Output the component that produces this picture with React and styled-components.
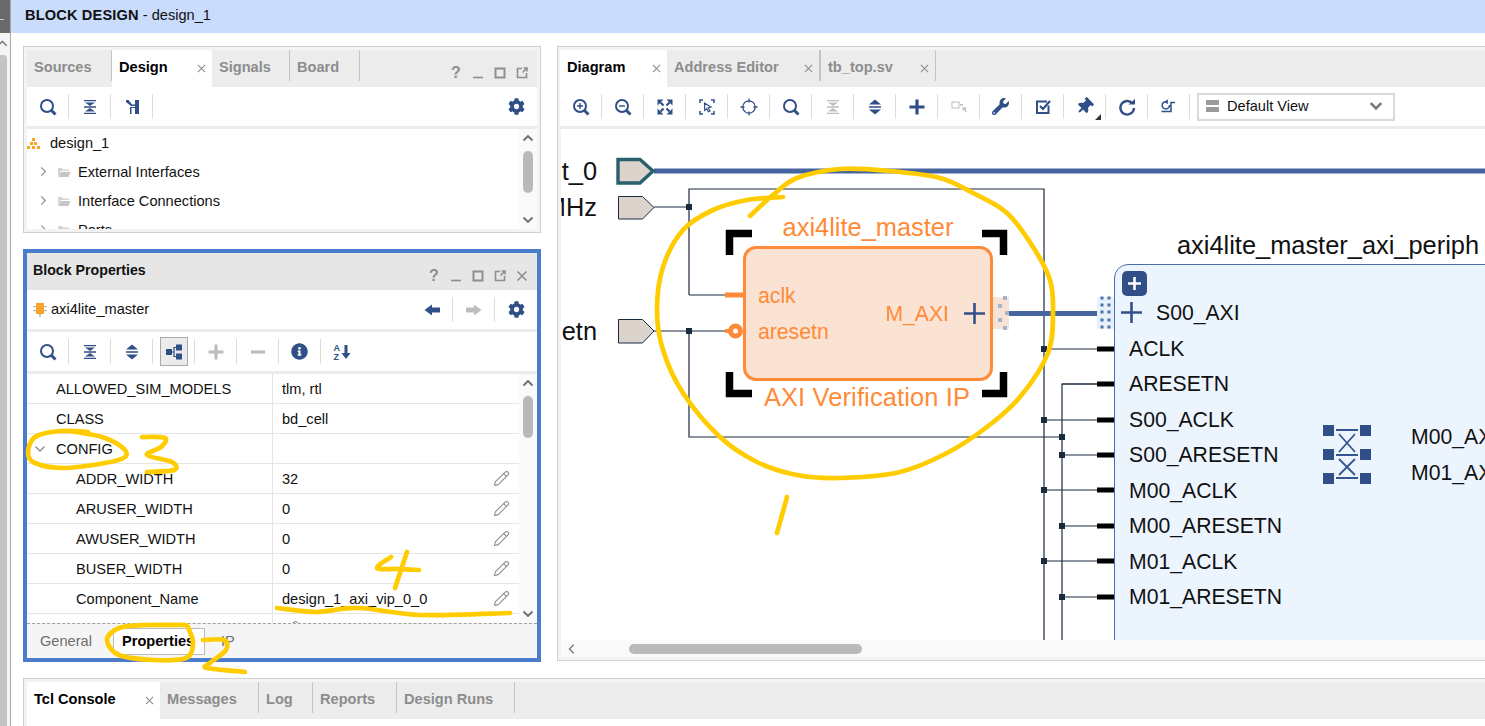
import React from "react";
import styled, { createGlobalStyle } from "styled-components";
import { FaCog, FaWrench, FaThumbtack, FaInfoCircle } from "react-icons/fa";
import { Pencil } from "lucide-react";

const Global = createGlobalStyle`
  html, body { margin: 0; padding: 0; background: #fff; overflow: hidden; }
  * { box-sizing: border-box; }
  body { font-family: "Liberation Sans", Arial, sans-serif; font-size: 14.6px; color: #111; }
`;

const BLUE = "#2f4f86";
const STRIP = "#ececec";

const Page = styled.div`
  position: relative; width: 1485px; height: 726px; overflow: hidden; display: flex; background: #fff;
`;
const Rail = styled.div`
  width: 11px; flex: none; display: flex; flex-direction: column; border-right: 1px solid #a9a9a9; background: #f4f4f4;
`;
const RailTop = styled.div`
  height: 33px; background: #6a6a6a; position: relative;
  &::after { content: ""; position: absolute; left: 0; top: 19px; width: 4px; height: 1px; background: #c8c8c8; }
`;
const RailArrow = styled.div`
  height: 22px; display: flex; align-items: center; color: #777;
`;
const RailThumb = styled.div`
  width: 7px; flex: 1; background: #c4c4c4; border-radius: 0 4px 0 0;
`;
const Main = styled.div`
  flex: 1; min-width: 0; display: flex; flex-direction: column;
`;
const Header = styled.div`
  height: 33px; flex: none; background: #c9dcfb; padding: 0 0 3px 14px; display: flex; align-items: center; font-size: 14.6px; white-space: pre;
  b { font-weight: 700; letter-spacing: 0.15px; }
`;
const Workspace = styled.div`
  display: flex; gap: 16px; padding: 13px 0 0 12px; flex: none; height: 645px;
`;
const LeftCol = styled.div`
  width: 518px; flex: none; display: flex; flex-direction: column; gap: 16px;
`;
const Panel = styled.div`
  border: 1px solid #d0d0d0; padding: 3px; background: #f3f3f3; display: flex; flex-direction: column;
`;
const SourcesPanel = styled(Panel)`height: 187px;`;
const PropsPanel = styled.div`
  height: 413px; border: 4px solid #4a7ccb; display: flex; flex-direction: column; background: #fff;
`;
const RightPane = styled(Panel)`
  flex: 1; min-width: 0; height: 615px; border-right: none; padding-right: 0; padding-left: 2px; overflow: hidden;
`;
const TabStrip = styled.div`
  height: 37px; flex: none; background: ${STRIP}; display: flex; align-items: flex-start; position: relative;
`;
const Tab = styled.div`
  width: ${p => p.$w}px; flex: none; height: ${p => (p.$active ? 37 : 31)}px; padding: 9px 6px 0 7px;
  display: flex; justify-content: space-between; line-height: 16px; font-weight: 700; font-size: 14.6px;
  color: ${p => (p.$active ? "#000" : "#8c8c8c")};
  background: ${p => (p.$active ? "#fff" : "transparent")};
  border-right: ${p => (p.$active ? "none" : `${p.$thick ? 2 : 1}px solid #c4c4c4`)};
`;
const CloseMark = styled.svg.attrs({ viewBox: "0 0 10 10" })`
  width: 9px; height: 9px; margin-top: 5px; flex: none; stroke: #8d8d8d; stroke-width: 1.2; fill: none;
`;
const Close = () => <CloseMark><path d="M1 1l8 8M9 1l-8 8" /></CloseMark>;
const WinButtons = styled.div`
  position: absolute; right: 4px; top: 13px; display: flex; color: #8e8e8e;
`;
const WinBtn = styled.div`
  width: 22px; height: 20px; display: flex; align-items: center; justify-content: center; font-weight: 700; font-size: 16px;
`;
const WinSvg = styled.svg.attrs({ viewBox: "0 0 12 12" })`
  width: 12px; height: 12px; fill: none; stroke: currentColor; stroke-width: 1.6;
`;
const Toolbar = styled.div`
  height: 42px; flex: none; background: #fff; border-bottom: 3px solid ${STRIP}; display: flex; align-items: center;
`;
const Tool = styled.div`
  width: 42px; height: 25px; flex: none; display: flex; align-items: center; justify-content: center;
  color: ${p => (p.$off ? "#bdbdbd" : BLUE)};
  border-right: ${p => (p.$last ? "none" : "1px solid #dcdcdc")};
`;
const ActiveBox = styled.div`
  width: 28px; height: 29px; background: #ebebeb; border: 1px solid #aaa; display: flex; align-items: center; justify-content: center;
`;
const Spacer = styled.div`flex: 1;`;
const Dropdown = styled.div`
  margin-left: 7px; width: 198px; height: 28px; border: 2px solid #d9d9d9; display: flex; align-items: center; padding: 0 10px 1px 7px; gap: 8px; font-size: 14.6px;
`;
const ViewBars = styled.div`
  width: 13px; height: 12px; flex: none; border-top: 5px solid #9a9a9a; border-bottom: 5px solid #9a9a9a;
`;
const TreeWrap = styled.div`
  height: 100px; flex: none; display: flex; background: #fff; overflow: hidden;
`;
const Tree = styled.div`flex: 1; min-width: 0;`;
const TreeRow = styled.div`
  height: 29px; flex: none; display: flex; align-items: center; white-space: nowrap; padding: 0 0 2px ${p => p.$pad}px;
`;
const TreeGlyph = styled.span`
  display: flex; align-items: center; justify-content: ${p => (p.$start ? "flex-start" : "center")}; width: ${p => p.$w}px; flex: none;
`;
const VScroll = styled.div`
  width: 18px; flex: none; background: #fafafa; display: flex; flex-direction: column; align-items: center; color: #6d6d6d;
`;
const VArrow = styled.div`
  height: 18px; flex: none; margin-top: ${p => (p.$bottom ? "auto" : "0")}; display: flex; align-items: center; justify-content: center;
`;
const VThumb = styled.div`
  width: 10px; height: 42px; flex: none; margin-top: ${p => p.$top}px; background: #b9b9b9; border-radius: 5px;
`;
const Chevron = styled.svg.attrs({ viewBox: "0 0 12 12" })`
  width: ${p => p.$s || 12}px; height: ${p => p.$s || 12}px; fill: none; stroke: ${p => p.$c || "currentColor"}; stroke-width: ${p => p.$sw || 1.8}; flex: none;
`;
const TitleBar = styled.div`
  height: 37px; flex: none; background: #e6e6e6; position: relative; font-weight: 700; padding: 9px 0 0 6px; line-height: 16px; font-size: 14.2px;
`;
const ObjectRow = styled(Toolbar)`padding-left: 0;`;
const ObjectName = styled.div`
  display: flex; align-items: center; padding: 0 0 2px 6px; gap: 4px; white-space: nowrap;
`;
const TableWrap = styled.div`
  height: 249px; flex: none; display: flex; overflow: hidden; background: #fff;
`;
const Table = styled.div`flex: 1; min-width: 0;`;
const Row = styled.div`
  display: grid; grid-template-columns: 246px 1fr; height: 30px; border-bottom: 1px solid #e5e5e5;
`;
const NameCell = styled.div`
  border-right: 1px solid #e5e5e5; display: flex; align-items: center; padding-left: ${p => p.$pad}px; white-space: nowrap;
`;
const ValueCell = styled.div`
  display: flex; align-items: center; justify-content: space-between; padding: 0 9px 0 9px; white-space: nowrap;
`;
const RowChevron = styled.span`
  width: 29px; flex: none; display: flex; padding-left: 7px; color: #8a8a8a;
`;
const PenIcon = styled(Pencil)`
  width: 17px; height: 17px; color: #8c8c8c; stroke-width: 1.5; flex: none;
`;
const BottomTabs = styled.div`
  height: 35px; flex: none; border-top: 1px dashed #a0a0a0; background: #f5f5f5; display: flex; align-items: center; padding-left: 13px; font-size: 14.6px;
`;
const BottomTab = styled.div`
  height: 27px; display: flex; align-items: center; white-space: nowrap;
  width: ${p => p.$w}px; flex: none; padding-left: ${p => p.$pad}px;
  color: ${p => (p.$active ? "#000" : "#6e6e6e")}; font-weight: ${p => (p.$active ? 700 : 400)};
  background: ${p => (p.$active ? "#fff" : "transparent")};
  border: ${p => (p.$active ? "1px solid #bbb" : "none")};
`;
const Canvas = styled.div`
  position: relative; flex: 1; min-height: 0; margin-left: 1px; overflow: hidden; background: #fff;
`;
const Wires = styled.svg`
  position: absolute; left: 0; top: 0; width: 924px; height: 511px;
`;
const PortLabel = styled.div`
  position: absolute; right: 888px; top: ${p => p.$y - 129 - 15}px; line-height: 30px; font-size: 25.4px; white-space: nowrap; color: #111;
`;
const IpBlock = styled.div`
  position: absolute; left: 182px; top: 117px; width: 250px; height: 135px; border: 3px solid #ff8a38; border-radius: 13px; background: #fbe3d3;
  display: flex; align-items: center; justify-content: space-between; padding: 0 5px 0 12px; color: #ff8a38; font-size: 21.2px;
`;
const IpTitle = styled.div`
  position: absolute; left: -2px; right: 0; text-align: center; line-height: 28px; font-size: 25.4px; white-space: nowrap; color: #ff8a38;
  ${p => (p.$below ? "top: calc(100% + 5px); letter-spacing: 0.15px;" : "bottom: calc(100% + 8px); left: 0;")}
`;
const IpPins = styled.div`display: flex; flex-direction: column;`;
const IpPin = styled.div`height: 36px; line-height: 36px; white-space: nowrap;`;
const IpOutput = styled.div`display: flex; align-items: center; gap: 15px;`;
const BluePlus = styled.svg.attrs({ viewBox: "0 0 21 21" })`
  width: 21px; height: 21px; flex: none; stroke: #34508a; stroke-width: 2.6; fill: none;
`;
const Interconnect = styled.div`
  position: absolute; left: 553px; top: 135px; width: 500px; height: 400px; background: #ecf4fe; border: 1px solid #4a6ea9; border-radius: 14px 0 0 0;
  display: flex; font-size: 21.2px; color: #111;
`;
const NodeTitle = styled.div`
  position: absolute; left: 62px; bottom: calc(100% + 6px); line-height: 28px; font-size: 25.4px; white-space: nowrap; color: #111;
`;
const ExpandBtn = styled.div`
  position: absolute; left: 7px; top: 6px; width: 25px; height: 25px; border-radius: 5px; background: ${BLUE}; display: flex; align-items: center; justify-content: center;
`;
const PinsLeft = styled.div`
  width: 208px; flex: none; padding: 30px 0 0 14px; display: flex; flex-direction: column;
`;
const Pin = styled.div`
  height: 35.5px; line-height: 35.5px; white-space: nowrap; display: flex; align-items: center;
  ${p => p.$plus && "margin-left: -8px; gap: 14px;"}
`;
const CrossIcon = styled.svg.attrs({ viewBox: "0 0 48 59" })`
  width: 48px; height: 59px; margin-top: 160px; flex: none;
`;
const PinsRight = styled.div`
  margin: 154px 0 0 40px; flex: none; display: flex; flex-direction: column;
`;
const HScroll = styled.div`
  height: 17px; flex: none; margin-left: 1px; background: #fafafa; display: flex; align-items: center; padding-left: 6px; color: #777;
`;
const HThumb = styled.div`
  width: 233px; height: 10px; margin-left: 52px; background: #bababa; border-radius: 5px;
`;
const Console = styled.div`
  margin-left: 12px; flex: none; height: 48px; border-top: 1px solid #d0d0d0; border-left: 1px solid #d0d0d0; padding: 3px 0 0 3px; background: #f3f3f3;
`;
const ConsoleBody = styled.div`height: 8px; background: #fff;`;
const InkLayer = styled.svg`
  position: absolute; left: 0; top: 0; width: 1485px; height: 726px; pointer-events: none; fill: none; stroke: #ffcc00; stroke-width: 4.7; stroke-linecap: round; stroke-linejoin: round;
`;

const Ico = styled.svg.attrs({ viewBox: "0 0 20 20" })`
  width: 20px; height: 20px; flex: none; fill: currentColor; stroke: none;
`;
const Glyph = styled.g`fill: none; stroke: currentColor;`;

const Search = ({ inner }) => (
  <Ico>
    <Glyph strokeWidth="2"><circle cx="9" cy="9" r="6" /></Glyph>
    <Glyph strokeWidth="3"><path d="M13.5 13.5l4 4" /></Glyph>
    {inner && <Glyph strokeWidth="1.4"><path d={inner} /></Glyph>}
  </Ico>
);
const CollapseAll = () => (
  <Ico>
    <path d="M4 3h12v1.3H4zM4 9.3h12v1.4H4zM4 15.7h12V17H4zM5 5.500h10L10 9zM5 14.500h10L10 11z" />
  </Ico>
);
const ExpandAll = () => (
  <Ico>
    <path d="M10 2.500l6 5H4zM4 9.200h12v1.600H4zM4 12.500h12l-6 5z" />
  </Ico>
);
const HierStep = () => (
  <Ico>
    <path d="M4 3h2.500L10 7.500h3V3h4v14h-4v-6H9.500v6H8v-7h5V9H9L4 5z" />
  </Ico>
);
const Fit = () => (
  <Ico>
    <path d="M2.500 2.500h6l-6 6zM17.500 2.500v6l-6-6zM2.500 17.500v-6l6 6zM17.500 17.500h-6l6-6z" />
    <Glyph strokeWidth="2.200"><path d="M5.500 5.500l3 3M14.500 5.500l-3 3M5.500 14.500l3-3M14.500 14.500l-3-3" /></Glyph>
  </Ico>
);
const SelectArea = () => (
  <Ico>
    <Glyph strokeWidth="1.500"><path d="M6 3H3v3M14 3h3v3M3 14v3h3M17 14v3h-3" /></Glyph>
    <Glyph strokeWidth="1.200"><path d="M7.500 6l6.500 4-2.800.7L13 14l-1.600.8-1.700-3.200-2 1.800z" /></Glyph>
  </Ico>
);
const Target = () => (
  <Ico>
    <Glyph strokeWidth="1.300"><circle cx="10" cy="10" r="6.200" /><path d="M10 1.500v4M10 14.500v4M1.500 10h4M14.500 10h4" /></Glyph>
  </Ico>
);
const PlusIco = () => (
  <Ico><path d="M8.400 2.500h3.200v5.900h5.900v3.200h-5.900v5.900H8.400v-5.900H2.500V8.400h5.900z" /></Ico>
);
const MinusIco = () => (
  <Ico><path d="M3 8.400h14v3.200H3z" /></Ico>
);
const RouteOff = () => (
  <Ico>
    <Glyph strokeWidth="1"><rect x="3" y="5" width="7" height="6" /></Glyph>
    <path d="M11 7h3v1.500h-3zM13 10.500h5l-1.500 1.500 1.200 3-1.300.5-1.200-3-1.200 1.200z" />
  </Ico>
);
const CheckBox = () => (
  <Ico>
    <Glyph strokeWidth="2"><path d="M15.500 8.500v7.500H4V4.500h10" /></Glyph>
    <Glyph strokeWidth="2.200"><path d="M7 9l3 3 7-8" /></Glyph>
  </Ico>
);
const Refresh = () => (
  <Ico>
    <Glyph strokeWidth="2.400"><path d="M15.500 6.500A6.800 6.800 0 1 0 17 11" /></Glyph>
    <path d="M11.500 7.500h6.500V2z" />
  </Ico>
);
const Regen = () => (
  <Ico>
    <Glyph strokeWidth="1.500"><path d="M7.500 4.700A3.700 3.700 0 1 0 10.500 8M2.500 14.500H12V5.500h4" /></Glyph>
    <path d="M5.500 4.800l3.400-2.600v5z" />
  </Ico>
);
const ArrowLeft = () => (
  <Ico><path d="M2.500 10L10 4.500v3h8v5h-8v3z" /></Ico>
);
const ArrowRight = () => (
  <Ico><path d="M17.500 10L10 4.500v3H2v5h8v3z" /></Ico>
);
const HierToggle = () => (
  <Ico>
    <path d="M2 7h6v6H2zM12 2.500h6v6h-6zM12 11.500h6v6h-6z" />
    <Glyph strokeWidth="1.200"><path d="M8 10h2V5.500h2M10 10v4.500h2" /></Glyph>
  </Ico>
);
const SortLetter = styled.text`
  font-family: "Liberation Sans", Arial, sans-serif; font-size: 9px; font-weight: 700; fill: currentColor;
`;
const SortAZ = () => (
  <Ico>
    <SortLetter x="1.500" y="9">A</SortLetter>
    <SortLetter x="1.500" y="18">Z</SortLetter>
    <path d="M12.500 3h3v8h3l-4.500 6-4.500-6h3z" />
  </Ico>
);
const Gear = () => <FaCog size={17} color={BLUE} />;
const Pin45 = styled(FaThumbtack)`
  transform: rotate(45deg); width: 17px; height: 17px; color: ${BLUE};
`;
const PinWrap = styled.div`
  position: relative; display: flex;
  &::after { content: ""; position: absolute; right: -8px; bottom: -5px; border: 3px solid transparent; border-right-color: #333; border-bottom-color: #333; }
`;
const OrgIcon = () => (
  <svg viewBox="0 0 13 12" width="13" height="12">
    <path fill="#fba51e" d="M5 1h3v3H5zM3 5h3v3H3zM7 5h3v3H7zM0 9h3v3H0zM5 9h3v3H5zM10 9h3v3h-3z" />
  </svg>
);
const FolderIcon = () => (
  <svg viewBox="0 0 14 12" width="14" height="12">
    <path fill="#d4d4d4" d="M1 2h4l1 1.500h6V5H3.500L1 10.500z" />
    <path fill="#c6c6c6" d="M3.500 6H13.500l-2 5H1.200z" />
  </svg>
);
const CellIcon = () => (
  <svg viewBox="0 0 14 16" width="14" height="16">
    <path fill="#b5b5b5" d="M0 5h3v1.300H0zM0 9h3v1.300H0zM11 5h3v1.300h-3zM11 9h3v1.300h-3zM6.300 13h1.400v3H6.300z" />
    <rect x="3" y="2" width="8" height="11" fill="#f9a32c" />
  </svg>
);

/* Ink strokes are hand drawn: interpolated through the traced points. */
const smooth = pts => {
  let d = `M${pts[0][0]} ${pts[0][1]}`;
  for (let i = 0; i < pts.length - 1; i++) {
    const p0 = pts[i - 1] || pts[i];
    const p1 = pts[i];
    const p2 = pts[i + 1];
    const p3 = pts[i + 2] || p2;
    const c1x = p1[0] + (p2[0] - p0[0]) / 6;
    const c1y = p1[1] + (p2[1] - p0[1]) / 6;
    const c2x = p2[0] - (p3[0] - p1[0]) / 6;
    const c2y = p2[1] - (p3[1] - p1[1]) / 6;
    d += `C${c1x.toFixed(1)} ${c1y.toFixed(1)} ${c2x.toFixed(1)} ${c2y.toFixed(1)} ${p2[0]} ${p2[1]}`;
  }
  return d;
};
const INK = [
  [[750,216],[773,195],[797,178],[840,169],[890,171],[940,178],[973,193],[1007,213],[1033,247],[1050,280],[1053,313],[1048,353],[1020,397],[987,427],[947,453],[900,472],[840,478],[797,475],[757,462],[720,437],[683,393],[663,350],[657,310],[663,267],[683,230],[713,210],[747,200],[783,197]],
  [[787,497],[782,515],[777,533]],
  [[70,431],[102,437],[123,448],[125,457],[105,463],[63,468],[35,463],[28,453],[35,437],[60,431],[88,432]],
  [[142,437],[165,438],[161,447],[147,455],[172,462],[174,470],[147,472]],
  [[391,557],[377,568],[398,569],[419,570]],
  [[407,552],[401,570],[395,588]],
  [[277,608],[316,612],[358,608],[421,615],[510,613]],
  [[186,625],[147,625],[119,628],[107,640],[119,655],[154,660],[186,658],[193,643],[188,627]],
  [[203,640],[224,640],[226,650],[210,663],[207,668],[245,672]],
];

const propRows = [
  ["ALLOWED_SIM_MODELS", "tlm, rtl", 29],
  ["CLASS", "bd_cell", 29],
  ["CONFIG", "", 0],
  ["ADDR_WIDTH", "32", 49, true],
  ["ARUSER_WIDTH", "0", 49, true],
  ["AWUSER_WIDTH", "0", 49, true],
  ["BUSER_WIDTH", "0", 49, true],
  ["Component_Name", "design_1_axi_vip_0_0", 49, true],
  ["", "", 49, true],
];
const leftPins = ["ACLK", "ARESETN", "S00_ACLK", "S00_ARESETN", "M00_ACLK", "M00_ARESETN", "M01_ACLK", "M01_ARESETN"];

const Windows = ({ close }) => (
  <WinButtons>
    <WinBtn>?</WinBtn>
    <WinBtn><WinSvg><path d="M1 10.500h10" /></WinSvg></WinBtn>
    <WinBtn><WinSvg><rect x="1.500" y="1.500" width="9" height="9" strokeWidth="2" /></WinSvg></WinBtn>
    <WinBtn><WinSvg><path d="M6 1.500H1.500v9h9V6M6.500 5.500L11 1M7.500 1H11v3.500" /></WinSvg></WinBtn>
    {close && <WinBtn><WinSvg><path d="M1.500 1.500l9 9M10.500 1.500l-9 9" /></WinSvg></WinBtn>}
  </WinButtons>
);
const ChevUp = () => <Chevron><path d="M1.500 8.500L6 4l4.500 4.500" /></Chevron>;
const ChevDown = () => <Chevron><path d="M1.500 3.500L6 8l4.500-4.500" /></Chevron>;
const ChevRight = () => <Chevron $s={11} $c="#8f8f8f" $sw={1.300}><path d="M3.500 1.500L8 6l-4.500 4.500" /></Chevron>;

const Scroll = ({ top }) => (
  <VScroll>
    <VArrow><ChevUp /></VArrow>
    <VThumb $top={top} />
    <VArrow $bottom><ChevDown /></VArrow>
  </VScroll>
);

const Diagram = () => {
  const X = v => v - 561;
  const Y = v => v - 129;
  const wire = "#1a2b40";
  const pinYs = [349, 384, 420, 455, 490, 526, 561, 597];
  const squares = [];
  const J = (x, y) => squares.push(<rect key={`${x}-${y}`} x={X(x) - 3} y={Y(y) - 3} width="6" height="6" fill={wire} />);
  [[689, 207], [689, 331], [1062, 437]].forEach(([x, y]) => J(x, y));
  pinYs.forEach((y, i) => { if (i !== 1) J(i % 2 ? 1062 : 1044, y); });
  return (
    <Canvas>
      <Wires viewBox="0 0 924 511">
        <g fill="none" stroke={wire} strokeWidth="1.200">
          <path d={`M${X(689)} ${Y(295)}V${Y(189)}H${X(1044)}V${Y(645)}`} />
          <path d={`M${X(654)} ${Y(207)}H${X(689)}`} />
          <path d={`M${X(689)} ${Y(295)}H${X(726)}`} />
          <path d={`M${X(654)} ${Y(331)}H${X(726)}`} />
          <path d={`M${X(689)} ${Y(331)}V${Y(437)}H${X(1062)}`} />
          <path d={`M${X(1098)} ${Y(384)}H${X(1062)}V${Y(645)}`} />
          {pinYs.map((y, i) => <path key={y} d={`M${X(i % 2 ? 1062 : 1044)} ${Y(y)}H${X(1098)}`} />)}
        </g>
        {squares}
        {pinYs.map(y => <rect key={y} x={X(1097)} y={Y(y) - 2.500} width="17" height="5" fill="#000" />)}
        <path d={`M${X(654)} ${Y(171)}H924`} stroke="#46649f" strokeWidth="5" />
        <path d={`M${X(1009)} ${Y(313.500)}H${X(1098)}`} stroke="#46649f" strokeWidth="5" />
        <path d={`M${X(618)} ${Y(159.500)}h22l13 11.500-13 12h-22z`} fill="#dcd3cd" stroke="#2a5f6e" strokeWidth="3.400" />
        <path d={`M${X(618.500)} ${Y(196.500)}h24l11.500 11-11.500 11.500h-24z`} fill="#dcd3cd" stroke={wire} strokeWidth="1" />
        <path d={`M${X(618.500)} ${Y(319.500)}h24l11.500 11.500-11.500 12h-24z`} fill="#dcd3cd" stroke={wire} strokeWidth="1" />
        <rect x={X(725)} y={Y(292.500)} width="18" height="5" fill="#ff8a38" />
        <rect x={X(725)} y={Y(329)} width="8" height="4" fill="#ff8a38" />
        <circle cx={X(735.500)} cy={Y(331)} r="5" fill="#fff" stroke="#ff8a38" strokeWidth="5" />
        <rect x={X(993)} y={Y(297)} width="16" height="32" fill="#f7e2d5" />
        {[[1005, 298], [1000, 306], [1007, 313], [1000, 320], [1005, 328]].map(([x, y]) => (
          <rect key={y} x={X(x) - 2} y={Y(y) - 2} width="4" height="4" fill="#a8b2c8" />
        ))}
        <rect x={X(1097)} y={Y(297)} width="17" height="32" fill="#e8f1fb" />
        {[1102, 1109].flatMap(x => [298, 305, 312, 320, 327].map(y => (
          <rect key={`${x}${y}`} x={X(x) - 1.500} y={Y(y) - 1.500} width="3" height="3" fill="#4a74ab" />
        )))}
        <g fill="none" stroke="#000" strokeWidth="7.500">
          <path d={`M${X(729.500)} ${Y(255)}V${Y(233.500)}H${X(752)}`} />
          <path d={`M${X(982)} ${Y(233.500)}H${X(1003.500)}V${Y(255)}`} />
          <path d={`M${X(729.500)} ${Y(372)}V${Y(393.500)}H${X(752)}`} />
          <path d={`M${X(982)} ${Y(393.500)}H${X(1003.500)}V${Y(372)}`} />
        </g>
      </Wires>

      <PortLabel $y={171}>t_0</PortLabel>
      <PortLabel $y={207}>MHz</PortLabel>
      <PortLabel $y={331}>etn</PortLabel>

      <IpBlock>
        <IpTitle>axi4lite_master</IpTitle>
        <IpPins>
          <IpPin>aclk</IpPin>
          <IpPin>aresetn</IpPin>
        </IpPins>
        <IpOutput>
          M_AXI
          <BluePlus><path d="M0 10.500h21M10.500 0v21" /></BluePlus>
        </IpOutput>
        <IpTitle $below>AXI Verification IP</IpTitle>
      </IpBlock>

      <Interconnect>
        <NodeTitle>axi4lite_master_axi_periph</NodeTitle>
        <ExpandBtn>
          <svg viewBox="0 0 13 13" width="13" height="13"><path d="M6.500 0v13M0 6.500h13" stroke="#fff" strokeWidth="2.600" /></svg>
        </ExpandBtn>
        <PinsLeft>
          <Pin $plus><BluePlus><path d="M0 10.500h21M10.500 0v21" /></BluePlus>S00_AXI</Pin>
          {leftPins.map(p => <Pin key={p}>{p}</Pin>)}
        </PinsLeft>
        <CrossIcon>
          <g fill={BLUE}>
            {[0, 24, 48].flatMap(y => [0, 37].map(x => <rect key={`${x}${y}`} x={x} y={y} width="11" height="11" />))}
          </g>
          <g fill="none" stroke="#34558f" strokeWidth="1.800">
            <path d="M13 5h22M13 30h22M13 53h22" />
            <path d="M16 9l16 18M32 9L16 27M16 34l16 16M32 34L16 50" />
          </g>
        </CrossIcon>
        <PinsRight>
          <Pin>M00_AXI</Pin>
          <Pin>M01_AXI</Pin>
        </PinsRight>
      </Interconnect>
    </Canvas>
  );
};

export default function App() {
  return (
    <Page>
      <Global />
      <Rail>
        <RailTop />
        <RailArrow><Chevron $s={10}><path d="M-3 8L3 3l5 5" /></Chevron></RailArrow>
        <RailThumb />
      </Rail>
      <Main>
        <Header><b>BLOCK DESIGN</b> - design_1</Header>
        <Workspace>
          <LeftCol>
            <SourcesPanel>
              <TabStrip>
                <Tab $w={85}>Sources</Tab>
                <Tab $w={100} $active>Design<Close /></Tab>
                <Tab $w={78}>Signals</Tab>
                <Tab $w={70}>Board</Tab>
                <Windows />
              </TabStrip>
              <Toolbar>
                <Tool><Search /></Tool>
                <Tool><CollapseAll /></Tool>
                <Tool><HierStep /></Tool>
                <Spacer />
                <Tool $last><Gear /></Tool>
              </Toolbar>
              <TreeWrap>
                <Tree>
                  <TreeRow $pad={0}><TreeGlyph $w={23} $start><OrgIcon /></TreeGlyph>design_1</TreeRow>
                  <TreeRow $pad={11}><TreeGlyph $w={11}><ChevRight /></TreeGlyph><TreeGlyph $w={29}><FolderIcon /></TreeGlyph>External Interfaces</TreeRow>
                  <TreeRow $pad={11}><TreeGlyph $w={11}><ChevRight /></TreeGlyph><TreeGlyph $w={29}><FolderIcon /></TreeGlyph>Interface Connections</TreeRow>
                  <TreeRow $pad={11}><TreeGlyph $w={11}><ChevRight /></TreeGlyph><TreeGlyph $w={29}><FolderIcon /></TreeGlyph>Ports</TreeRow>
                </Tree>
                <Scroll top={4} />
              </TreeWrap>
            </SourcesPanel>
            <PropsPanel>
              <TitleBar>Block Properties<Windows close /></TitleBar>
              <ObjectRow>
                <ObjectName><CellIcon />axi4lite_master</ObjectName>
                <Spacer />
                <Tool><ArrowLeft /></Tool>
                <Tool $off><ArrowRight /></Tool>
                <Tool $last><Gear /></Tool>
              </ObjectRow>
              <Toolbar>
                <Tool><Search /></Tool>
                <Tool><CollapseAll /></Tool>
                <Tool><ExpandAll /></Tool>
                <Tool><ActiveBox><HierToggle /></ActiveBox></Tool>
                <Tool $off><PlusIco /></Tool>
                <Tool $off><MinusIco /></Tool>
                <Tool><FaInfoCircle size={17} /></Tool>
                <Tool $last><SortAZ /></Tool>
              </Toolbar>
              <TableWrap>
                <Table>
                  {propRows.map(([name, value, pad, editable], i) => (
                    <Row key={i}>
                      <NameCell $pad={pad}>
                        {pad === 0 && <RowChevron><Chevron $s={12} $c="#8f8f8f" $sw={1.300}><path d="M1.500 3.500L6 8l4.500-4.500" /></Chevron></RowChevron>}
                        {name}
                      </NameCell>
                      <ValueCell>{value}{editable && <PenIcon />}</ValueCell>
                    </Row>
                  ))}
                </Table>
                <Scroll top={4} />
              </TableWrap>
              <BottomTabs>
                <BottomTab $w={73} $pad={0}>General</BottomTab>
                <BottomTab $w={92} $pad={8} $active>Properties</BottomTab>
                <BottomTab $w={40} $pad={16}>IP</BottomTab>
              </BottomTabs>
            </PropsPanel>
          </LeftCol>
          <RightPane>
            <TabStrip>
              <Tab $w={107} $active>Diagram<Close /></Tab>
              <Tab $w={154} $thick>Address Editor<Close /></Tab>
              <Tab $w={115}>tb_top.sv<Close /></Tab>
            </TabStrip>
            <Toolbar>
              <Tool><Search inner="M6 9h6M9 6v6" /></Tool>
              <Tool><Search inner="M6 9h6" /></Tool>
              <Tool><Fit /></Tool>
              <Tool><SelectArea /></Tool>
              <Tool><Target /></Tool>
              <Tool><Search /></Tool>
              <Tool $off><CollapseAll /></Tool>
              <Tool><ExpandAll /></Tool>
              <Tool><PlusIco /></Tool>
              <Tool $off><RouteOff /></Tool>
              <Tool><FaWrench size={17} /></Tool>
              <Tool><CheckBox /></Tool>
              <Tool><PinWrap><Pin45 /></PinWrap></Tool>
              <Tool><Refresh /></Tool>
              <Tool><Regen /></Tool>
              <Dropdown>
                <ViewBars />
                Default View
                <Spacer />
                <Chevron $s={14} $c="#777" $sw={2.200}><path d="M1.500 3.500L6 8l4.500-4.500" /></Chevron>
              </Dropdown>
            </Toolbar>
            <Diagram />
            <HScroll>
              <Chevron $s={10} $sw={1.600}><path d="M8 1L3 6l5 5" /></Chevron>
              <HThumb />
            </HScroll>
          </RightPane>
        </Workspace>
        <Console>
          <TabStrip>
            <Tab $w={133} $active>Tcl Console<Close /></Tab>
            <Tab $w={99}>Messages</Tab>
            <Tab $w={54}>Log</Tab>
            <Tab $w={84}>Reports</Tab>
            <Tab $w={118}>Design Runs</Tab>
          </TabStrip>
          <ConsoleBody />
        </Console>
      </Main>
      <InkLayer viewBox="0 0 1485 726">
        {INK.map((pts, i) => <path key={i} d={smooth(pts)} />)}
      </InkLayer>
    </Page>
  );
}
